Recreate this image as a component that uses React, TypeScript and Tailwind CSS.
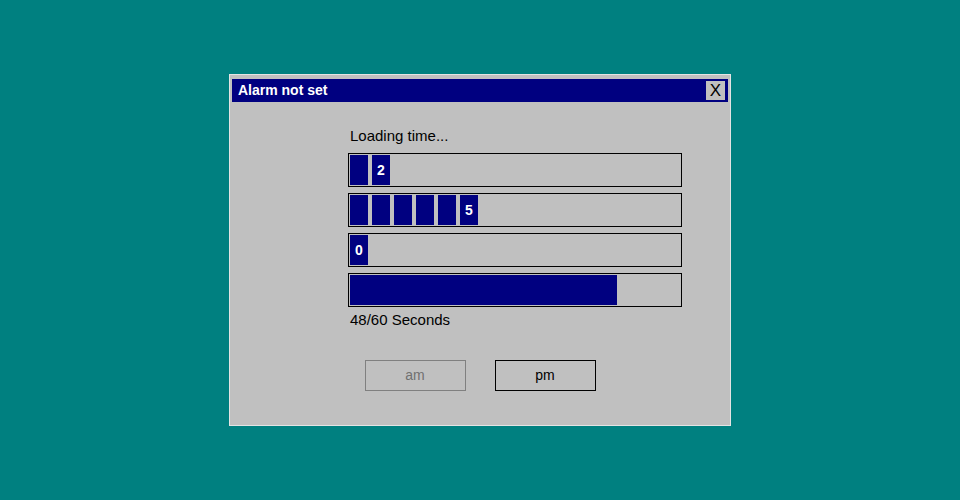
const rows = [
  { value: 2, blank: 1 },
  { value: 5, blank: 5 },
  { value: 0, blank: 0 },
];
const elapsed = 48;
const total = 60;

function Blocks({ value, blank }: { value: number; blank: number }) {
  return (
    <div className="flex h-[34px] w-[334px] gap-[4px] border border-black p-[1px]">
      {Array.from({ length: blank + 1 }).map((_, i) => (
        <div
          key={i}
          className="flex h-full w-[18px] items-center justify-center bg-[#000080] text-[14px] font-bold text-white"
        >
          {i === blank ? value : ""}
        </div>
      ))}
    </div>
  );
}

export default function App() {
  const fill = Math.round((elapsed / total) * 330) + 3;

  return (
    <div
      className="flex h-[500px] w-[960px] items-center justify-center bg-[#008080]"
      style={{ fontFamily: '"Liberation Sans", Arial, sans-serif' }}
    >
      <div className="flex h-[352px] w-[502px] flex-col border border-[#e4e4e4] bg-[#c0c0c0] px-[2px] pt-[4px]">
        <div className="flex h-[23px] items-center justify-between bg-[#000080] pl-[6px] pr-[3px]">
          <span className="text-[14px] font-bold text-white">Alarm not set</span>
          <button className="flex h-[19px] w-[19px] items-center justify-center bg-[#c0c0c0] text-[17px] leading-none text-black">
            X
          </button>
        </div>

        <div className="ml-[116px] mt-[25px] flex flex-col">
          <p className="pl-[2px] text-[15px] leading-[17px] text-black">Loading time...</p>
          <div className="mt-[9px] flex flex-col gap-[6px]">
            {rows.map((r, i) => (
              <Blocks key={i} value={r.value} blank={r.blank} />
            ))}
            <div className="h-[34px] w-[334px] border border-black p-[1px]">
              <div className="h-full bg-[#000080]" style={{ width: fill }} />
            </div>
          </div>
          <p className="mt-[4px] pl-[2px] text-[15px] leading-[17px] text-black">
            {elapsed}/{total} Seconds
          </p>
        </div>

        <div className="mt-[32px] flex justify-center gap-[29px]">
          <button className="h-[31px] w-[101px] border border-[#808080] text-[14px] text-[#707070]">
            am
          </button>
          <button className="h-[31px] w-[101px] border border-black text-[14px] text-black">
            pm
          </button>
        </div>
      </div>
    </div>
  );
}
